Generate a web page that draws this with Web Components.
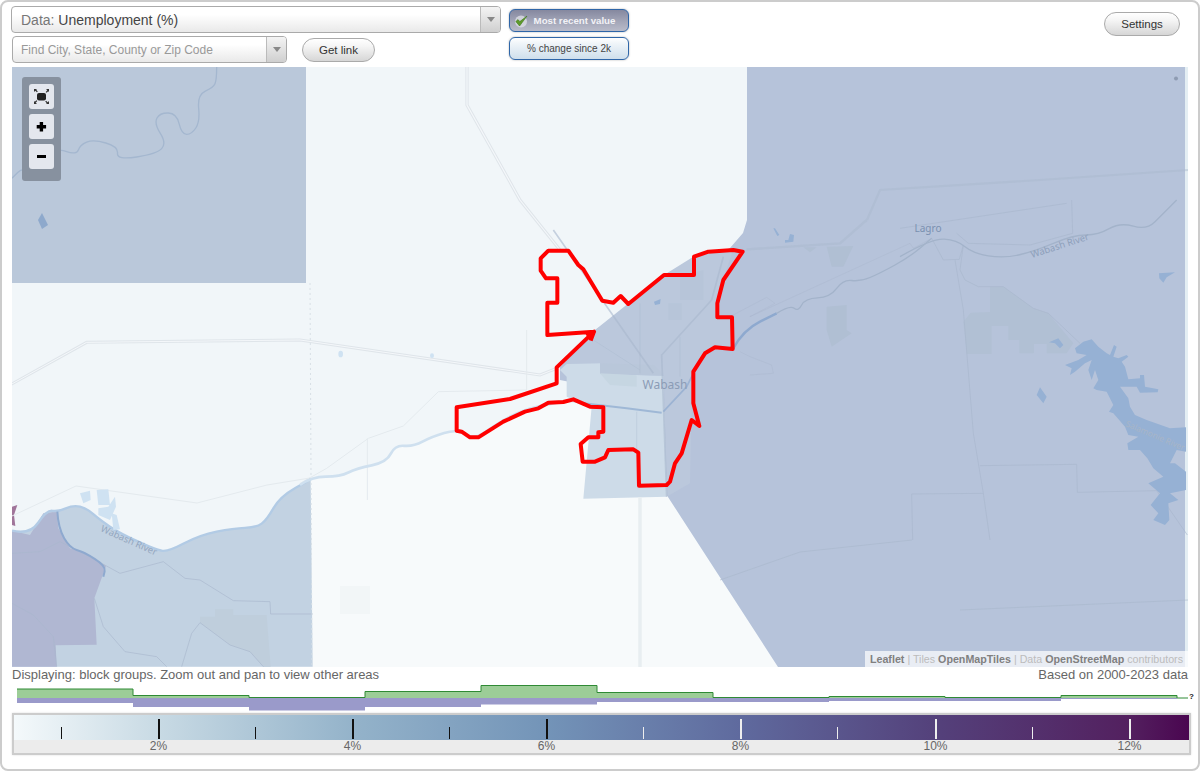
<!DOCTYPE html>
<html>
<head>
<meta charset="utf-8">
<title>Unemployment map</title>
<style>
    html, body { margin: 0; padding: 0; background: #fff; }
    body { font-family: "Liberation Sans", Arial, sans-serif; }
</style>
</head>
<body>
<sv-app></sv-app>

<script>
// Dropdown box with the arrow part on the right
class SvSelect extends HTMLElement {
    constructor() {
        super();
        this.attachShadow({ mode: 'open' });
        this.shadowRoot.innerHTML = `
            <style>
                :host {
                    display: flex;
                    box-sizing: border-box;
                    height: 27px;
                    border: 1px solid #aaa;
                    border-radius: 4px;
                    background: linear-gradient(#fff 30%, #e9e9e9);
                    overflow: hidden;
                }
                .label {
                    flex: 1;
                    padding: 1px 0 0 var(--pad, 9px);
                    line-height: 25px;
                    font-size: var(--size, 14px);
                    color: var(--colour, #777);
                    white-space: nowrap;
                }
                .arrow {
                    width: 19px;
                    border-left: 1px solid #bbb;
                    background: linear-gradient(#f4f4f4, #cfcfcf);
                    display: flex;
                    align-items: center;
                    justify-content: center;
                }
                .arrow i {
                    border: 4px solid transparent;
                    border-top: 5px solid #888;
                    border-bottom: 0;
                }
            </style>
            <div class="label"><slot></slot></div>
            <div class="arrow"><i></i></div>
        `;
    }
}

// Rounded grey button
class SvButton extends HTMLElement {
    constructor() {
        super();
        this.attachShadow({ mode: 'open' });
        this.shadowRoot.innerHTML = `
            <style>
                :host {
                    display: flex;
                    box-sizing: border-box;
                    align-items: center;
                    justify-content: center;
                    border: 1px solid #aaa;
                    border-radius: 12px;
                    background: linear-gradient(#fff, #f4f4f4 35%, #d6d6d6);
                    font-size: 11.5px;
                    color: #333;
                }
            </style>
            <slot></slot>
        `;
    }
}

// Blue framed toggle for the value mode
class SvToggle extends HTMLElement {
    constructor() {
        super();
        this.attachShadow({ mode: 'open' });
        this.shadowRoot.innerHTML = `
            <style>
                :host {
                    display: flex;
                    box-sizing: border-box;
                    width: 120px;
                    height: 23px;
                    align-items: center;
                    justify-content: center;
                    gap: 2px;
                    border: 1px solid #2f66a8;
                    border-radius: 6px;
                    box-shadow: 0 0 2px #aaa;
                    background: linear-gradient(#fff, #f0f5f9 25%, #cfdfec);
                    font-size: 10px;
                    color: #444;
                }
                :host([active]) {
                    background: linear-gradient(#85889f, #a3a6b8 55%, #b9bbc9);
                    color: #f2f2f6;
                    font-weight: bold;
                    font-size: 9.7px;
                }
                svg { display: none; margin-left: -5px; transform: translateX(-4px); }
                :host([active]) svg { display: block; }
            </style>
            <svg width="14" height="14" viewBox="0 0 14 14">
                <circle cx="7" cy="7.5" r="6" fill="#dcdde5" opacity=".8"/>
                <path d="M1.8 7.5 L5.6 12 L13 2 L5.8 7.6 L4 5.6 Z" fill="#5f9a2c" stroke="#3f7a1c" stroke-width=".6"/>
            </svg>
            <span><slot></slot></span>
        `;
    }
}

// Zoom panel over the map
class SvZoom extends HTMLElement {
    constructor() {
        super();
        this.attachShadow({ mode: 'open' });
        this.shadowRoot.innerHTML = `
            <style>
                :host {
                    position: absolute;
                    left: 10px;
                    top: 10px;
                    display: flex;
                    flex-direction: column;
                    box-sizing: border-box;
                    width: 39px;
                    height: 104px;
                    padding: 7px;
                    gap: 5px;
                    border-radius: 3px;
                    background: #87919f;
                }
                div {
                    width: 25px;
                    height: 25px;
                    border-radius: 3px;
                    background: #e4e7ee;
                }
                svg { display: block; }
            </style>
            <div><svg width="25" height="25" viewBox="0 0 25 25">
                <rect x="8" y="9" width="9" height="7.5" rx="2" fill="#222"/>
                <path d="M5 5h3l-.8 .8 1.6 1.6-.9 .9-1.6-1.6L5 8z M20 5v3l-.8-.8-1.6 1.6-.9-.9 1.6-1.6L17 5z M5 20v-3l.8 .8 1.6-1.6 .9 .9-1.6 1.6L8 20z M20 20h-3l.8-.8-1.6-1.6 .9-.9 1.6 1.6L20 17z" fill="#333"/>
            </svg></div>
            <div><svg width="25" height="25" viewBox="0 0 25 25"><path d="M10.7 8h3.4v3h3v3.4h-3v3h-3.4v-3h-3v-3.4h3z" fill="#000"/></svg></div>
            <div><svg width="25" height="25" viewBox="0 0 25 25"><rect x="8" y="11" width="9" height="3" fill="#000"/></svg></div>
        `;
    }
}

// Maakt van een puntenlijst een vloeiende lijn
function curve(p) {
    let d = `M${p[0][0]} ${p[0][1]}`;
    for (let i = 1; i < p.length - 1; i++) {
        const mx = (p[i][0] + p[i + 1][0]) / 2;
        const my = (p[i][1] + p[i + 1][1]) / 2;
        d += ` Q${p[i][0]} ${p[i][1]} ${mx} ${my}`;
    }
    const last = p[p.length - 1];
    return d + ` L${last[0]} ${last[1]}`;
}

// The map: a free canvas, drawn in page coordinates
class SvMap extends HTMLElement {
    constructor() {
        super();
        this.attachShadow({ mode: 'open' });

        const z1 = 'scale(.33333)';
        const z2 = 'translate(640 220) scale(.33333)';
        const z3 = 'translate(300 330) scale(.33333)';
        const z7 = 'translate(440 230) scale(.33333)';
        const z8 = 'translate(0 470) scale(.33333)';
        const z9 = 'translate(900 200) scale(.33333)';
        const zl = 'translate(1060 330) scale(.33333)';

        // rivieren
        const wabashWest = curve([[36,182],[90,195],[140,120],[175,125],[220,105],[260,115],[300,150],[360,190],[470,240],[505,245],[600,195],[700,175],[770,172],[800,150],[840,80],[932,28]]);
        const wabashMid = curve([[0,465],[35,440],[120,440],[170,415],[260,397],[285,345],[340,350],[395,320],[470,298],[510,322],[540,318],[600,275],[670,240],[735,225],[820,208],[870,232],[900,235]]);
        const wabashEast = curve([[280,385],[310,330],[410,280]]);
        const wabashFar = curve([[410,280],[450,255],[475,275],[495,235],[570,232],[610,178],[660,185],[720,160],[810,110],[875,55]]);
        const wabashNorth = curve([[0,170],[95,115],[170,120],[220,160],[310,175],[400,155],[520,105],[595,105],[660,67],[740,90],[790,40],[830,0]]);
        const eel = curve([[650,200],[650,240],[640,262],[592,285],[600,365],[575,403],[545,403],[530,340],[480,338],[462,370],[500,430],[470,462],[350,480],[355,440],[280,418],[240,435],[230,465],[165,443],[180,510],[110,535],[70,500],[36,535]]);
        const branch = curve([[172,125],[175,175],[210,235],[250,245],[318,288],[310,320]]);

        this.shadowRoot.innerHTML = `
            <style>
                :host {
                    display: block;
                    position: relative;
                    height: 600px;
                    overflow: hidden;
                    background: #f1f6f9;
                }
                svg { display: block; }
                text { font-family: "Noto Sans", "Liberation Sans", sans-serif; }
                .thin { fill: none; stroke: #a3b4c8; stroke-width: 3; stroke-linejoin: round; }
                .road { fill: none; stroke: #e4eaee; stroke-width: 1; }
                .grey { fill: none; stroke: #a8b7cc; stroke-width: 1; }
                .wide { fill: none; stroke: #dfe5ea; stroke-width: 3.2; }
                .wide2 { fill: none; stroke: #f4f7fa; stroke-width: 1.2; }
                .water { fill: #96b1d4; }
                .pale { fill: #cfe2f2; }
                .attr {
                    position: absolute;
                    right: 0;
                    bottom: 0;
                    padding: 0 5px;
                    height: 16px;
                    line-height: 16px;
                    background: rgba(255, 255, 255, .7);
                    font-size: 10.7px;
                    color: #bcbcbc;
                    white-space: nowrap;
                }
                .attr b { color: #808080; }
            </style>
            <svg width="1176" height="600" viewBox="12 67 1176 600">
                <!-- vlakken -->
                <rect x="12" y="67" width="1176" height="600" fill="#f1f6f9"/>
                <rect x="1185" y="67" width="3" height="600" fill="#e4eef3"/>
                <path transform="${z3}" d="${wabashMid} L1104 501 L1434 1011 L30 1011 Z" fill="#f7fafb"/>
                <rect x="12" y="67" width="294" height="216" fill="#bac8da"/>
                <path d="M747 67 L747 220 L743 233 L730 248 L690 270 L595 330 L560 367 L560 380 L660 400 L668 497 L778 667 L1185 667 L1185 67 Z" fill="#b6c3da"/>
                <polygon transform="${z7}" points="360,420 465,300 672,135 760,80 880,55 850,150 832,220 832,262 876,262 878,357 800,360 760,425 755,520 750,760 680,800 672,437 480,432 480,400 380,402" fill="#bbc8dc"/>
                <polygon transform="${z7}" points="360,420 380,402 480,400 480,432 670,437 680,800 430,806 455,530 380,500 380,440" fill="#cddbe8"/>
                <path transform="${z8}" d="${wabashWest} L938 590 L36 590 Z" fill="#c2d2e2"/>
                <path transform="${z8}" d="M36 182 L90 195 L130 130 L170 125 L175 175 L210 235 L250 245 L318 288 L283 385 L290 524 L167 526 L170 590 L36 590 Z" fill="#b0b7d2"/>
                <path transform="${z8}" d="M36 110 L52 105 L42 135 L46 168 L36 165 Z" fill="#a0759a"/>

                <!-- stedelijk gebied -->
                <path transform="${z9}" d="M270 260 L310 260 L400 325 L445 340 L520 430 L500 460 L440 460 L440 432 L402 432 L402 460 L358 460 L358 420 L325 420 L325 378 L275 378 L275 462 L200 462 L190 365 L212 338 L270 336 Z" fill="#b1c0d4"/>
                <path transform="${z8}" d="M600 440 L645 440 L645 418 L700 418 L700 435 L800 435 L812 590 L790 590 L750 545 L690 525 L600 458 Z" fill="#bfcedc"/>
                <path transform="${z2}" d="M560 260 L620 255 L620 330 L635 340 L575 380 L560 330 Z M560 80 L640 78 L610 140 L575 140 Z M490 82 L530 82 L510 97 Z" fill="#b0bfd3"/>
                <path transform="${z2}" d="M120 170 L190 150 L190 240 L120 240 Z M85 250 L125 250 L125 300 L85 300 Z" fill="#b7c5d9"/>
                <path transform="${z7}" d="M480 400 L640 405 L672 437 L480 432 Z" fill="#b9c7da"/>
                <path transform="${z7}" d="M480 430 L590 436 L590 470 L510 465 Z" fill="#c6d6e2"/>
                <rect x="340" y="586" width="30" height="28" fill="#f2f6f7"/>

                <!-- wegen -->
                <path class="wide" transform="${z3}" d="M-870 165 L-640 37 L0 30 L720 135 L770 115" style="stroke-width:9"/>
                <path class="wide2" transform="${z3}" d="M-870 165 L-640 37 L0 30 L720 135 L770 115" style="stroke-width:3"/>
                <path class="wide" d="M467 67 L467 105 L520 200 L560 250"/>
                <path class="wide2" d="M467 67 L467 105 L520 200 L560 250"/>
                <path class="wide" d="M640 497 L640 667" style="stroke:#e8eef1;stroke-width:3.5"/>
                <path class="road" transform="${z3}" d="M680 0 L680 180 L415 185 L310 288 L205 325 L80 415 L0 460 M202 325 L202 510" style="stroke-width:3"/>
                <path class="road" d="M12 516 L76 486 L197 503 L267 485 L310 478"/>
                <path class="road" d="M310 283 L312 667" stroke-dasharray="2 3" style="stroke:#d8e0e6"/>
                <path class="thin" transform="${z7}" d="M340 0 L640 430 M850 80 L815 210 L665 375 L680 800" style="stroke:#a9b8cd;stroke-width:5;opacity:.6"/>
                <path class="thin" transform="${z7}" d="M600 220 L600 430 M460 330 L600 420 M720 320 L720 440 M590 545 L590 670" style="opacity:.3"/>
                <path class="grey" transform="${z2}" d="M320 88 L600 70 L680 0" style="stroke-width:7;opacity:.45"/>
                <path class="grey" d="M867 220 L880 190 L1040 180 L1188 170" style="stroke-width:2.2;opacity:.45"/>
                <path class="grey" transform="${z2}" d="M330 290 L810 70 L820 85 L875 55 M270 290 L380 232 L405 250 L330 290 M300 395 L330 410 L395 435 L400 460 L330 465" style="stroke-width:2;opacity:.6"/>
                <path class="grey" transform="${z9}" d="M0 85 L500 10 M515 0 L518 100 L390 135 L205 130 L170 100 M95 115 L130 180 L178 178 L190 135 L180 210 L195 240 L235 260 L310 260 L400 325 L445 340 L540 430 M165 180 L190 330 L220 700 L250 880 L270 1020 M240 797 L530 793 L532 877 L770 872 L862 1005 M35 882 L250 880 M35 882 L38 1020" style="stroke-width:2.4;opacity:.8"/>
                <path class="grey" d="M912 540 L800 552 L720 580 M960 610 L1188 600" style="opacity:.6"/>
                <path class="grey" transform="${z8}" d="M36 250 L120 245 L180 215 L250 250 L360 310 L490 275 L555 325 L600 330 L700 392 L810 395 L812 432 L938 432 M283 385 L310 470 L375 545 L470 560 L500 590 M545 590 L575 490 L600 458 L690 525 L750 545 L790 590 M36 400 L100 435 L160 500 L170 590" style="stroke-width:2.4;opacity:.8"/>

                <!-- water -->
                <path transform="${z8}" d="${wabashWest}" fill="none" stroke="#b2cbe5" stroke-width="7"/>
                <path transform="${z3}" d="${wabashMid}" fill="none" stroke="#cfe0ef" stroke-width="8"/>
                <path transform="${z7}" d="M430 520 L560 535 L665 548" fill="none" stroke="#9fb8d6" stroke-width="6"/>
                <path transform="${z7}" d="M670 545 L740 470 L770 410" fill="none" stroke="#8ea9cf" stroke-width="5" opacity=".7"/>
                <path transform="${z2}" d="${wabashEast}" fill="none" stroke="#8ea9cf" stroke-width="7"/>
                <path class="thin" transform="${z2}" d="${wabashFar}" style="stroke:#a3b3ca;stroke-width:4"/>
                <path transform="${z8}" d="${branch}" fill="none" stroke="#8ea9cf" stroke-width="6"/>
                <path class="thin" transform="${z9}" d="${wabashNorth}" style="stroke:#a3b3ca;stroke-width:4"/>
                <path class="thin" transform="${z1}" d="${eel}" style="stroke:#a4b7cf;stroke-width:4"/>
                <path d="M38 220 L42 213 L48 225 L42 229 Z" fill="#8ea9cc"/>
                <path transform="${zl}" class="water" d="M45 55 L70 35 L95 28 L115 50 L140 70 L150 75 L162 45 L170 50 L160 80 L175 85 L200 75 L205 80 L185 95 L195 110 L205 148 L240 145 L240 135 L252 135 L255 170 L295 178 L293 187 L240 188 L230 170 L180 170 L205 205 L210 230 L225 255 L260 270 L330 295 L378 292 L378 365 L350 360 L330 400 L345 400 L378 425 L378 480 L330 490 L355 510 L325 520 L328 570 L315 585 L280 570 L295 550 L272 525 L300 490 L265 460 L310 440 L280 415 L262 385 L240 360 L205 360 L202 340 L235 320 L205 315 L195 290 L160 250 L147 245 L160 225 L140 185 L110 180 L100 175 L115 150 L105 120 L95 150 L85 120 L95 90 L75 100 L45 125 L30 135 L35 115 L15 105 L55 90 L80 75 L50 70 Z"/>
                <path transform="${z9}" class="water" d="M447 427 L475 415 L490 435 L480 445 L465 430 Z M420 562 L440 590 L430 610 L410 585 Z M777 220 L825 217 L800 232 L790 248 L778 235 Z"/>
                <path transform="${z2}" class="water" d="M400 25 L405 25 L418 45 L412 48 Z M435 60 L445 60 L450 42 L462 45 L460 65 L435 68 Z"/>
                <path transform="${z7}" class="water" d="M642 215 L662 207 L660 222 L645 225 Z"/>
                <ellipse transform="${z3}" cx="122" cy="72" rx="7" ry="10" fill="#cfe2f2"/>
                <ellipse transform="${z3}" cx="396" cy="77" rx="6" ry="7" fill="#cfe2f2"/>
                <path transform="${z8}" class="pale" d="M240 70 L270 62 L272 90 L250 100 Z M290 60 L325 58 L330 105 L295 105 Z M295 115 L325 110 L345 80 L348 110 L330 150 L295 135 Z M335 130 L350 135 L360 178 L340 180 Z"/>
                <circle cx="1176" cy="78.5" r="2" fill="#8e9bb2"/>

                <!-- namen -->
                <text x="665" y="389" font-size="12" text-anchor="middle" fill="#8b9cb6">Wabash</text>
                <text x="928" y="232" font-size="10" text-anchor="middle" fill="#7a90b0">Lagro</text>
                <text transform="translate(1032 258) rotate(-18)" font-size="9.5" fill="#8ea0ba">Wabash River</text>
                <text transform="translate(1125 426) rotate(23)" font-size="8.4" fill="#a8b5c7">Salamonie River</text>
                <text transform="translate(100 531) rotate(24)" font-size="9.5" fill="#93a6bf">Wabash River</text>

                <!-- stadsgrens -->
                <path transform="${z7}" fill="none" stroke="#ff0000" stroke-width="12" stroke-linejoin="round" d="M325 62 L385 62 L415 105 L430 118 L487 212 L520 218 L542 198 L565 222 L672 135 L762 135 L762 80 L805 65 L880 60 L908 65 L850 150 L832 220 L832 262 L876 262 L878 357 L825 352 L795 370 L760 425 L760 520 L778 588 L755 570 L725 670 L705 700 L690 755 L680 765 L597 767 L595 668 L580 658 L505 660 L495 682 L465 695 L428 695 L422 642 L445 622 L475 622 L475 607 L490 605 L490 532 L450 530 L400 508 L370 516 L325 518 L295 535 L255 545 L190 575 L115 622 L90 622 L65 605 L50 602 L50 532 L210 507 L350 460 L350 412 L462 305 L322 315 L322 218 L352 218 L352 145 L318 145 L302 122 L302 85 Z M440 318 L462 305 L452 332"/>
            </svg>
            <sv-zoom></sv-zoom>
            <div class="attr"><b>Leaflet</b> | Tiles <b>OpenMapTiles</b> | Data <b>OpenStreetMap</b> contributors</div>
        `;
    }
}

// Histogram above the legend
class SvHistogram extends HTMLElement {
    connectedCallback() {
        this.attachShadow({ mode: 'open' });

        // [bovenkant groen, onderkant paars] per klasse
        const bins = [[689, 703], [695.5, 707], [697.5, 710.5], [691.5, 707], [685.5, 704.5], [692.5, 702],
                      [697.5, 702], [696.5, 701], [697.5, 701], [695.5, 699], [698, 698]];
        const base = 698;
        let green = '', purple = '', line = '';
        bins.forEach((b, i) => {
            const x = 17 + i * 116;
            const w = i === 10 ? 11 : 116;
            green += `<rect x="${x}" y="${b[0]}" width="${w}" height="${base - b[0]}"/>`;
            purple += `<rect x="${x}" y="${base}" width="${w}" height="${b[1] - base}"/>`;
            line += (i ? 'L' : 'M') + x + ' ' + b[0] + ' L' + (x + w) + ' ' + b[0] + ' ';
        });

        this.shadowRoot.innerHTML = `
            <style>
                :host { display: block; height: 28px; }
                svg { display: block; }
                text { font: bold 8px "Liberation Sans", Arial, sans-serif; fill: #222; }
            </style>
            <svg width="1186" height="28" viewBox="12 685 1186 28">
                <g fill="#9ccd97">${green}</g>
                <g fill="#9a9aca">${purple}</g>
                <path d="${line}" fill="none" stroke="#2f8a35" stroke-width="1"/>
                <text x="1189" y="699">?</text>
            </svg>
        `;
    }
}

// Colour scale with ticks and percentages
class SvLegend extends HTMLElement {
    connectedCallback() {
        this.attachShadow({ mode: 'open' });

        const majors = [[144.5, '2%', '#111'], [338.5, '4%', '#111'], [532.5, '6%', '#111'], [726.5, '8%', '#eee'], [921.5, '10%', '#eee'], [1115.5, '12%', '#eee']];
        const minors = [[47.5, '#111'], [241.5, '#111'], [435.5, '#111'], [629.5, '#eee'], [823.5, '#eee'], [1018, '#eee']];

        let ticks = '', labels = '';
        majors.forEach(m => {
            ticks += `<i style="left:${m[0] - 1}px;top:4px;width:2px;height:20px;background:${m[2]}"></i>`;
            labels += `<span style="left:${m[0] - 30}px">${m[1]}</span>`;
        });
        minors.forEach(m => {
            ticks += `<i style="left:${m[0] - .5}px;top:12px;width:1px;height:12px;background:${m[1]}"></i>`;
        });

        this.shadowRoot.innerHTML = `
            <style>
                :host {
                    display: block;
                    box-sizing: border-box;
                    width: 1179px;
                    height: 42px;
                    border: 2px solid #ccc;
                    box-shadow: 0 0 2px #ddd;
                }
                .bar {
                    position: relative;
                    height: 25px;
                    background: linear-gradient(to right, #f4f9fb 0, #c8dae4 144px, #94b3ca 338px, #7394b8 532px, #5f6a9e 726px, #54417b 921px, #53205f 1115px, #4a0650 100%);
                }
                .bar i { position: absolute; display: block; }
                .labels {
                    position: relative;
                    height: 13px;
                    background: #ececec;
                }
                .labels span {
                    position: absolute;
                    top: -1px;
                    width: 60px;
                    text-align: center;
                    font-size: 12px;
                    line-height: 15px;
                    color: #666;
                }
            </style>
            <div class="bar">${ticks}</div>
            <div class="labels">${labels}</div>
        `;
    }
}

// De hele pagina
class SvApp extends HTMLElement {
    constructor() {
        super();
        this.attachShadow({ mode: 'open' });
        this.shadowRoot.innerHTML = `
            <style>
                :host {
                    display: block;
                    box-sizing: border-box;
                    width: 1200px;
                    height: 771px;
                    padding: 0 10px;
                    border: 2px solid #ccc;
                    border-radius: 8px;
                    background: #fff;
                    overflow: hidden;
                }
                .tools { display: flex; height: 65px; }
                .left { margin-left: -1px; width: 490px; display: flex; flex-direction: column; padding-top: 4px; gap: 3px; }
                .data { width: 490px; --size: 14px; }
                .data em { font-style: normal; color: #444; }
                .second { display: flex; align-items: center; margin-left: 1px; }
                .find { width: 275px; --size: 12px; --colour: #999; --pad: 8px; }
                .link { width: 73px; height: 24px; margin-left: 15px; }
                .modes { display: flex; flex-direction: column; gap: 5px; margin-left: 8px; padding-top: 7px; }
                .settings { width: 76px; height: 24px; margin: 10px 8px 0 auto; }
                .caption {
                    display: flex;
                    justify-content: space-between;
                    height: 18px;
                    line-height: 16px;
                    font-size: 13px;
                    color: #666;
                }
            </style>
            <div class="tools">
                <div class="left">
                    <sv-select class="data">Data: <em>Unemployment (%)</em></sv-select>
                    <div class="second">
                        <sv-select class="find">Find City, State, County or Zip Code</sv-select>
                        <sv-button class="link">Get link</sv-button>
                    </div>
                </div>
                <div class="modes">
                    <sv-toggle active>Most recent value</sv-toggle>
                    <sv-toggle>% change since 2k</sv-toggle>
                </div>
                <sv-button class="settings">Settings</sv-button>
            </div>
            <sv-map></sv-map>
            <div class="caption">
                <span>Displaying: block groups. Zoom out and pan to view other areas</span>
                <span>Based on 2000-2023 data</span>
            </div>
            <sv-histogram></sv-histogram>
            <sv-legend></sv-legend>
        `;
    }
}

customElements.define('sv-select', SvSelect);
customElements.define('sv-button', SvButton);
customElements.define('sv-toggle', SvToggle);
customElements.define('sv-zoom', SvZoom);
customElements.define('sv-map', SvMap);
customElements.define('sv-histogram', SvHistogram);
customElements.define('sv-legend', SvLegend);
customElements.define('sv-app', SvApp);
</script>
</body>
</html>
